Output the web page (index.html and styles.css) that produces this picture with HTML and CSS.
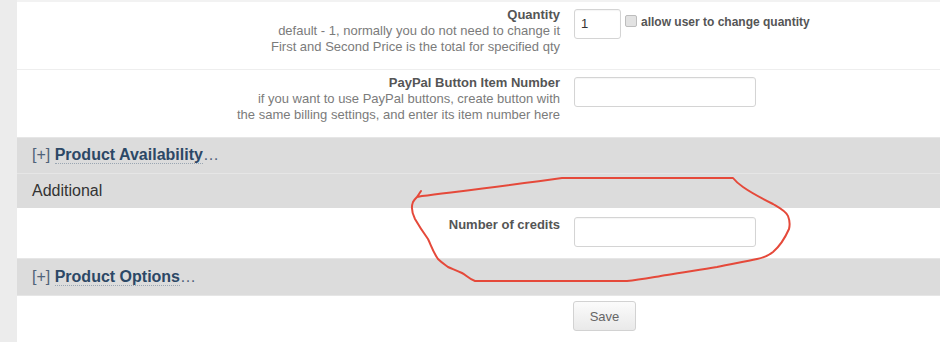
FILE: index.html
```html
<!DOCTYPE html>
<html>
<head>
<meta charset="utf-8">
<link rel="stylesheet" href="styles.css">
</head>
<body>
<div class="page">
  <div class="side"></div>
  <div class="main">
    <div class="topline"></div>
    <div class="field sep">
      <div class="label">
        <div class="name">Quantity</div>
        <div class="help">default - 1, normally you do not need to change it</div>
        <div class="help">First and Second Price is the total for specified qty</div>
      </div>
      <div class="control">
        <div class="input qty">1</div>
        <span class="check"></span>
        <span class="checklabel">allow user to change quantity</span>
      </div>
    </div>
    <div class="field">
      <div class="label">
        <div class="name">PayPal Button Item Number</div>
        <div class="help">if you want to use PayPal buttons, create button with</div>
        <div class="help">the same billing settings, and enter its item number here</div>
      </div>
      <div class="control">
        <div class="input wide"></div>
      </div>
    </div>
    <div class="head h1"><span class="plus">[+]</span> <span class="link">Product Availability</span><span class="plus">…</span></div>
    <div class="head h2 plain">Additional</div>
    <div class="field credits">
      <div class="label">
        <div class="name">Number of credits</div>
      </div>
      <div class="control">
        <div class="input wide"></div>
      </div>
    </div>
    <div class="head h3"><span class="plus">[+]</span> <span class="link">Product Options</span><span class="plus">…</span></div>
    <div class="field saverow">
      <div class="label"></div>
      <div class="control">
        <button class="btn">Save</button>
      </div>
    </div>
  </div>
</div>
<svg class="annot" width="940" height="342" viewBox="0 0 940 342">
  <path d="M421,191 L417,197 L422,196 C470,190 520,184 562,178 L733,178 C737,183 740,185 743,187 C753,194 763,199 773,204 C780,208 786,211 788,216 C790,221 790,225 789,229 C785,238 780,246 773,252 C768,256 762,258 757,259 C744,262 730,264 717,267 C700,270 684,272 667,275 C654,277 640,280 627,281 L475,281 C469,279 466,275 462,273 C456,270 452,269 448,267 C444,264 441,262 438,259 C433,252 431,245 428,239 C423,232 419,226 415,219 C412,213 411,207 413,202 C414,200 416,198 417,197" fill="none" stroke="#e5493a" stroke-width="2" stroke-linejoin="round" stroke-linecap="round"/>
</svg>
</body>
</html>
```
FILE: styles.css
```css
html, body {
  margin: 0;
  padding: 0;
  background: #fff;
}
body {
  font-family: "Liberation Sans", Arial, sans-serif;
  position: relative;
  width: 940px;
  height: 342px;
  overflow: hidden;
}
.page {
  display: flex;
  height: 342px;
}
.side {
  width: 17px;
  flex: none;
  background: #ececec;
}
.main {
  flex: 1;
  display: flex;
  flex-direction: column;
}
.topline {
  height: 2px;
  background: #f2f2f2;
}
.field {
  display: grid;
  grid-template-columns: 557px 1fr;
}
.field.sep {
  border-bottom: 1px solid #eeeeee;
}
.label {
  text-align: right;
  padding: 5px 14px 14px 0;
  font-size: 13px;
  line-height: 16px;
}
.name {
  font-weight: bold;
  color: #555;
}
.help {
  color: #7b7b7b;
}
.control {
  display: flex;
  align-items: flex-start;
  padding-top: 7px;
}
.input {
  box-sizing: border-box;
  height: 30px;
  border: 1px solid #d4d4d4;
  border-radius: 3px;
  background: #fff;
  box-shadow: inset 0 1px 1px rgba(0,0,0,0.04);
  font-size: 13px;
  line-height: 28px;
  color: #333;
  padding-left: 6px;
}
.input.qty {
  width: 47px;
}
.input.wide {
  width: 182px;
}
.check {
  box-sizing: border-box;
  width: 12px;
  height: 12px;
  margin: 6px 0 0 4px;
  background: #e2e2e2;
  border: 1px solid #bdbdbd;
  border-radius: 2px;
}
.checklabel {
  margin: 5px 0 0 4px;
  font-size: 12px;
  line-height: 16px;
  font-weight: bold;
  color: #555;
}
.head {
  background: #dcdcdc;
  border-top: 1px solid #e6e6e6;
  padding: 7px 15px 8px;
  font-size: 16px;
  line-height: 20px;
}
.head.h2 {
  padding: 7px 15px 7px;
  color: #333;
}
.head.h3 {
  padding: 8px 15px 8px;
  border-bottom: 1px solid #e6e6e6;
}
.plus {
  color: #4f6379;
}
.link {
  color: #2c4866;
  font-weight: bold;
  border-bottom: 1px dotted #9aa6b2;
}
.credits .label {
  padding: 9px 14px 11px 0;
}
.credits .control {
  padding: 9px 0 11px;
}
.saverow .label {
  padding: 0;
}
.saverow .control {
  padding-top: 5px;
}
.btn {
  box-sizing: border-box;
  height: 30px;
  width: 63px;
  margin-left: -1px;
  border: 1px solid #d2d2d2;
  border-radius: 3px;
  background: linear-gradient(#fbfbfb, #e9e9e9);
  font-family: "Liberation Sans", Arial, sans-serif;
  font-size: 13px;
  color: #666;
  padding: 0;
}
.annot {
  position: absolute;
  left: 0;
  top: 0;
  pointer-events: none;
}
```
